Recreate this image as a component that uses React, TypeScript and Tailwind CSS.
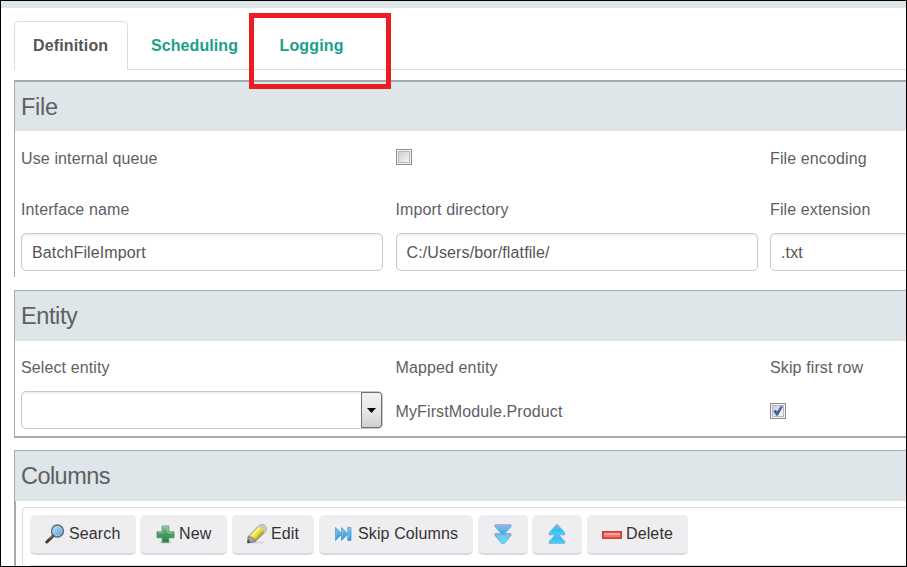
import type { ReactNode } from "react";

function Heading({ children, className = "h-[50px] tracking-[-0.4px]" }: { children: ReactNode; className?: string }) {
  return (
    <h2 className={`bg-[#dee6e9] pl-1.5 text-[23.5px] leading-[50px] text-[#5f6062] ${className}`}>
      {children}
    </h2>
  );
}

function Label({ children, className = "" }: { children: ReactNode; className?: string }) {
  return <div className={`h-5 leading-5 tracking-[0.12px] text-[#5f6063] ${className}`}>{children}</div>;
}

function TextField({ value }: { value: string }) {
  return (
    <div className="h-[38px] w-[362px] rounded-[5px] border border-[#c8c8c8] bg-white pl-2.5 leading-[37px] tracking-[0.12px] text-[#555] shadow-[inset_0_2px_2px_rgba(0,0,0,0.06)]">
      {value}
    </div>
  );
}

function Checkbox({ checked = false }: { checked?: boolean }) {
  return (
    <div className="size-4 border border-[#8b8c8e] bg-[#f4f4f4] p-px">
      <div className="size-3 border border-[#b4b9c1] bg-linear-to-br from-[#cbcfd5] to-[#f6f6f6]">
        {checked && (
          <svg viewBox="0 0 10 10" className="block size-[10px] overflow-visible">
            <path d="M.8 5.300 2.500 4 4 6.100 7.800.4 9.400.7 4.700 9.400 3.600 9.400Z" fill="#445c9e" stroke="#445c9e" strokeWidth=".7" />
          </svg>
        )}
      </div>
    </div>
  );
}

function SearchIcon() {
  return (
    <svg viewBox="0 0 20 20" className="size-5">
      <defs>
        <linearGradient id="lens" x1="0" y1="0" x2="1" y2="1">
          <stop stopColor="#c4e3fa" />
          <stop offset="1" stopColor="#4e9add" />
        </linearGradient>
      </defs>
      <path d="m8 12-6.200 6" stroke="#3c3c3e" strokeWidth="3" strokeLinecap="round" />
      <path d="m7.300 12-2.500 2.500" stroke="#aaa" strokeWidth="1" />
      <circle cx="12.500" cy="7" r="5.900" fill="url(#lens)" stroke="#62676e" strokeWidth="1.500" />
      <circle cx="12.500" cy="7" r="4.700" fill="none" stroke="#b7d3e8" strokeWidth=".6" />
    </svg>
  );
}

function PlusIcon() {
  return (
    <svg viewBox="0 0 20 20" className="size-5">
      <defs>
        <linearGradient id="plus" x1="0" y1="0" x2="0" y2="1">
          <stop stopColor="#8cc99c" />
          <stop offset=".5" stopColor="#469c61" />
          <stop offset="1" stopColor="#238448" />
        </linearGradient>
      </defs>
      <ellipse cx="10.500" cy="18.500" rx="6" ry="1" fill="#ccc" />
      <path d="M7.200 2h6.600v5.800H19v6h-5.200v4.500H7.200v-4.500H2v-6h5.200Z" fill="url(#plus)" stroke="#4a9362" strokeWidth=".8" />
      <path d="M8.200 3h4.600v5.800H18M3 8.800h5.200" fill="none" stroke="#a8d8b4" strokeWidth=".7" />
    </svg>
  );
}

function PencilIcon() {
  return (
    <svg viewBox="0 0 22 20" className="h-5 w-[22px]">
      <ellipse cx="11" cy="18.500" rx="8" ry="1" fill="#d4d4d6" />
      <path d="M1.500 19 2.300 12.500 13 1.500Q16-.3 19 1.500 21.500 4 19.800 7.500L9.500 17.500Z" fill="#e5dc42" stroke="#858678" strokeWidth=".9" />
      <path d="m3.500 12.500 9.500-10 2.200 1.200-9 9.800Z" fill="#f8f18a" />
      <path d="m8 15.500 9.800-9.700 1.600 1.700-10 9.500Z" fill="#b9ae35" />
      <path d="M13 1.500Q16-.3 19 1.500 21.500 4 19.800 7.500l-2 1.500q.4-4.500-6-6.200Z" fill="#c9cbc3" />
      <path d="M1.500 19 2.300 12.500q5.500 0 7.200 5Z" fill="#a3a19a" stroke="#6b6b68" strokeWidth=".6" />
      <path d="m1.500 19 .5-3.500 2.800 2.700Z" fill="#444" />
    </svg>
  );
}

function SkipIcon() {
  return (
    <svg viewBox="0 0 18 16" className="h-4 w-[18px]">
      <defs>
        <linearGradient id="skip" x1="0" y1="0" x2="0" y2="1">
          <stop stopColor="#8bc9ef" />
          <stop offset="1" stopColor="#278bd4" />
        </linearGradient>
      </defs>
      <g fill="url(#skip)" stroke="#509fd4" strokeWidth=".8">
        <path d="M1.500 1.500 8 8l-6.500 6.500Z" />
        <path d="M7.500 1.500 14 8l-6.500 6.500Z" />
        <path d="M13.700 1.500H17v13h-3.300Z" />
      </g>
      <path d="M2.300 4v8M8.300 4v8M14.600 3v10" stroke="#7cc3ec" strokeWidth=".7" />
    </svg>
  );
}

function DownIcon() {
  return (
    <svg viewBox="0 0 18 20" className="h-5 w-[18px]">
      <defs>
        <linearGradient id="downTop" x1="0" y1="0" x2="0" y2="1">
          <stop stopColor="#a3b2ea" />
          <stop offset="1" stopColor="#22b8f2" />
        </linearGradient>
        <linearGradient id="downBottom" x1="0" y1="0" x2="0" y2="1">
          <stop stopColor="#8eafe8" />
          <stop offset="1" stopColor="#3ff0ff" />
        </linearGradient>
      </defs>
      <g stroke="#78a0cf" strokeWidth=".8">
        <path d="M1 9.500h16v2L10.500 19.300h-3L1 11.500Z" fill="url(#downBottom)" />
        <path d="M1 .7h16v2L10 10.500H8L1 2.700Z" fill="url(#downTop)" />
      </g>
    </svg>
  );
}

function UpIcon() {
  return (
    <svg viewBox="0 0 18 20" className="h-5 w-[18px]">
      <defs>
        <linearGradient id="upFill" x1="0" y1="0" x2="0" y2="1">
          <stop stopColor="#8faee6" />
          <stop offset=".55" stopColor="#2fc0f8" />
          <stop offset="1" stopColor="#3fd5ff" />
        </linearGradient>
      </defs>
      <g fill="url(#upFill)" stroke="#78a0cf" strokeWidth=".8">
        <path d="M8.500 9.500h1L16.800 17.500v1.800H1.200v-1.800Z" />
        <path d="M8.500 .7h1L16.800 8.800v2H1.200v-2Z" />
      </g>
    </svg>
  );
}

function MinusIcon() {
  return (
    <svg viewBox="0 0 20 8" className="relative top-px h-2 w-5">
      <rect x=".5" y=".5" width="19" height="7" fill="#df5148" stroke="#cf3f38" />
      <path d="M2 2h16v2H2Z" fill="#f3a39b" />
      <path d="M2 4h16v2H2Z" fill="#e8756e" />
    </svg>
  );
}

function Button({ children, className }: { children: ReactNode; className: string }) {
  return (
    <button className={`flex h-10 shrink-0 items-center rounded-[5px] border-b-2 border-[#d7d7df] bg-[#eeeef0] tracking-[0.12px] text-[#333] ${className}`}>
      {children}
    </button>
  );
}

export default function App() {
  return (
    <div className="relative h-[567px] w-[907px] overflow-hidden border border-black bg-white font-['Liberation_Sans',Arial,sans-serif] text-base">
      <div className="h-[7px] bg-[#dee6e9]" />
      <nav className="ml-[13px] mt-[13px] flex h-[49px] font-bold leading-[47px]">
        <div className="w-[114px] rounded-t-[5px] border border-b-0 border-[#dcdcdc] pl-[18px] tracking-[0.15px] text-[#555]">Definition</div>
        <div className="flex grow border-b border-[#dcdcdc] text-[#1b9f88]">
          <div className="w-[128px] pl-[23px] pt-px tracking-[0.08px]">Scheduling</div>
          <div className="pl-[23.500px] pt-px tracking-[0.15px]">Logging</div>
        </div>
      </nav>

      <section className="ml-[13px] mt-2.5 h-[197px] border-l border-t-2 border-[#a1abb0]">
        <Heading className="h-[49px] tracking-[-0.3px]">File</Heading>
        <div className="grid grid-cols-[374.5px_374.5px_374.5px] pl-1.5 pt-[18px]">
          <Label>Use internal queue</Label>
          <div><Checkbox /></div>
          <Label>File encoding</Label>
          <Label className="mt-[31px]">Interface name</Label>
          <Label className="mt-[31px]">Import directory</Label>
          <Label className="mt-[31px]">File extension</Label>
          <div className="mt-[13px]"><TextField value="BatchFileImport" /></div>
          <div className="mt-[13px]"><TextField value="C:/Users/bor/flatfile/" /></div>
          <div className="mt-[13px]"><TextField value=".txt" /></div>
        </div>
      </section>

      <section className="ml-[13px] mt-[13px] h-[148px] border-b-2 border-l border-t border-[#a1abb0]">
        <Heading>Entity</Heading>
        <div className="grid grid-cols-[374.5px_374.5px_374.5px] pl-1.5 pt-[17px]">
          <Label>Select entity</Label>
          <Label>Mapped entity</Label>
          <Label>Skip first row</Label>
          <div className="mt-[13px] flex h-[38px] w-[362px] justify-end rounded-[5px] border border-[#c8c8c8] shadow-[inset_0_2px_2px_rgba(0,0,0,0.06)]">
            <div className="flex h-9 w-[21px] items-center justify-center rounded-r-[3px] border border-[#707070] bg-linear-to-b from-[#f2f2f2] via-[#e9e9e9] via-50% to-[#d0d0d0]">
              <svg viewBox="0 0 9 5" className="h-[5px] w-[9px]"><path d="M0 0h9L4.500 5Z" fill="#000" /></svg>
            </div>
          </div>
          <Label className="mt-6">MyFirstModule.Product</Label>
          <div className="mt-[25px]"><Checkbox checked /></div>
        </div>
      </section>

      <section className="ml-[13px] mt-3 h-[117px] border-t border-[#a1abb0]">
        <Heading className="h-[50px] border-l border-[#a1abb0] tracking-[-0.55px]">Columns</Heading>
        <div className="h-[70px] border-l-2 border-[#a1abb0] pl-1.5 pt-1.5">
          <div className="h-16 rounded-tl-[4px] border-l border-t border-[#dcdcdc] pl-[7px] pt-[7px]">
            <div className="flex">
              <Button className="w-[106px] pl-[15px]"><SearchIcon /><span className="ml-1">Search</span></Button>
              <Button className="ml-1 w-[87px] pl-[15px]"><PlusIcon /><span className="ml-1">New</span></Button>
              <Button className="ml-[5px] w-[82px] pl-3.5"><PencilIcon /><span className="ml-[3px]">Edit</span></Button>
              <Button className="ml-[5px] w-[154px] pl-[15px]"><SkipIcon /><span className="ml-1.5">Skip Columns</span></Button>
              <Button className="ml-[5px] w-[50px] justify-center"><DownIcon /></Button>
              <Button className="ml-1 w-[50px] justify-center"><UpIcon /></Button>
              <Button className="ml-[5px] w-[101px] pl-[15px]"><MinusIcon /><span className="ml-1">Delete</span></Button>
            </div>
            <div className="mt-2.5 h-px bg-[#dcdcdc]" />
          </div>
        </div>
      </section>

      <div className="absolute left-[248px] top-3 h-[76px] w-[142px] border-5 border-[#ed1c24]" />
    </div>
  );
}
